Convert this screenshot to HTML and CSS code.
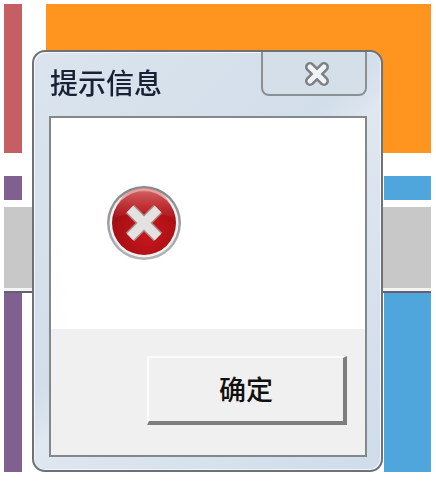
FILE: index.html
```html
<!DOCTYPE html>
<html lang="zh">
<head>
<meta charset="utf-8">
<title>提示信息</title>
<link rel="stylesheet" href="styles.css">
</head>
<body>
<div class="page">
  <div class="backdrop">
    <div class="row-top">
      <div class="tile red"></div>
      <div class="tile orange"></div>
    </div>
    <div class="row-split short">
      <div class="tile purple narrow"></div>
      <div class="tile blue side"></div>
    </div>
    <div class="band"></div>
    <div class="row-split tall">
      <div class="tile purple narrow"></div>
      <div class="tile blue side"></div>
    </div>
  </div>
  <div class="dialog">
    <div class="titlebar">
      <span class="title">提示信息</span>
      <div class="close">
        <svg class="close-icon" viewBox="0 0 30 24" width="30" height="24" aria-hidden="true">
          <path class="x-outer" d="M8 5L22 19M22 5L8 19"/>
          <path class="x-inner" d="M8 5L22 19M22 5L8 19"/>
        </svg>
      </div>
    </div>
    <div class="panel">
      <div class="content">
        <svg class="error-icon" viewBox="0 0 76 76" width="76" height="76" aria-hidden="true">
          <defs>
            <radialGradient id="redFill" cx="55%" cy="65%" r="60%">
              <stop offset="0" stop-color="#c8181d"/>
              <stop offset="0.7" stop-color="#ae1015"/>
              <stop offset="1" stop-color="#9c0d13"/>
            </radialGradient>
            <linearGradient id="ringFill" x1="0" y1="0" x2="0" y2="1">
              <stop offset="0" stop-color="#85888b"/>
              <stop offset="1" stop-color="#b3b5b7"/>
            </linearGradient>
            <linearGradient id="shine" x1="0" y1="0" x2="0" y2="1">
              <stop offset="0" stop-color="#e98686" stop-opacity="0.8"/>
              <stop offset="1" stop-color="#d94a4c" stop-opacity="0.15"/>
            </linearGradient>
          </defs>
          <circle cx="38" cy="38" r="37" fill="url(#ringFill)"/>
          <circle cx="38" cy="38" r="34.500" fill="#f1f1f1"/>
          <circle cx="38" cy="38" r="32" fill="url(#redFill)"/>
          <path d="M8 33A30 30 0 0 1 68 33Q38 22 8 33Z" fill="url(#shine)"/>
          <path class="cross-edge" d="M24 24L52 52M52 24L24 52"/>
          <path class="cross" d="M24 24L52 52M52 24L24 52"/>
        </svg>
      </div>
      <div class="footer">
        <button class="ok" type="button">确定</button>
      </div>
    </div>
  </div>
</div>
</body>
</html>
```

FILE: styles.css
```css
* {
  box-sizing: border-box;
}

html,
body {
  margin: 0;
  background: #fff;
}

.page {
  position: relative;
  width: 436px;
  height: 500px;
  overflow: hidden;
  font-family: "Noto Sans CJK SC", "Liberation Sans", sans-serif;
  filter: blur(0.45px);
}

.backdrop {
  display: flex;
  flex-direction: column;
  padding: 4px 5px 0 4px;
}

.row-top {
  display: flex;
  gap: 24px;
  height: 149px;
}

.red {
  width: 18px;
  background: #c65f63;
}

.orange {
  flex: 1;
  background: #ff951f;
}

.row-split {
  display: flex;
  justify-content: space-between;
}

.short {
  height: 24px;
  margin-top: 23px;
}

.tall {
  height: 179px;
}

.narrow {
  width: 18px;
}

.side {
  width: 47px;
}

.purple {
  background: #80608f;
}

.blue {
  background: #4fa6dc;
}

.band {
  height: 86px;
  margin-top: 7px;
  border-bottom: 2px solid #66606a;
  background: linear-gradient(#c8c8c8 0, #c8c8c8 81px, #f4f4f4 81px, #f4f4f4 84px);
}

.dialog {
  position: absolute;
  left: 32px;
  top: 50px;
  width: 351px;
  height: 422px;
  display: flex;
  flex-direction: column;
  padding: 0 14px 13px 15px;
  border: 2px solid #6d7277;
  border-radius: 13px;
  background: linear-gradient(135deg, #dbe4ee 0, #d2deea 45%, #dfe7f0 52%, #cfdcea 100%);
  box-shadow: inset 1px 1px 0 #f2f6fa, inset -1px -1px 0 #f2f6fa;
}

.titlebar {
  display: flex;
  justify-content: space-between;
  align-items: flex-start;
  height: 64px;
}

.title {
  margin: 10px 0 0 1px;
  font-size: 28px;
  font-weight: 500;
  line-height: 40px;
  color: #172335;
}

.close {
  display: flex;
  align-items: center;
  justify-content: center;
  width: 106px;
  height: 44px;
  padding: 1px 0 0 5px;
  border: 2px solid #8b9094;
  border-top: 0;
  border-radius: 0 0 8px 8px;
  background: #d5dfe9;
}

.x-outer {
  fill: none;
  stroke: #7c8085;
  stroke-width: 10;
  stroke-linecap: round;
}

.x-inner {
  fill: none;
  stroke: #f1f3f6;
  stroke-width: 5;
  stroke-linecap: round;
}

.panel {
  flex: 1;
  display: flex;
  flex-direction: column;
  border: 2px solid #85888b;
  background: #fff;
}

.content {
  height: 211px;
  padding: 67px 0 0 55px;
}

.error-icon {
  display: block;
}

.cross-edge {
  fill: none;
  stroke: #a9898a;
  stroke-width: 12;
}

.cross {
  fill: none;
  stroke: #e4e1e1;
  stroke-width: 9;
}

.footer {
  flex: 1;
  padding: 27px 0 0 96px;
  background: #f0f0f0;
}

.ok {
  display: block;
  width: 200px;
  height: 69px;
  padding: 0 0 3px;
  border-style: solid;
  border-width: 2px 4px 4px 2px;
  border-color: #fbfbfb #7d7d7d #7d7d7d #fbfbfb;
  background: #f0f0f0;
  color: #101010;
  font-family: inherit;
  font-size: 27px;
  font-weight: 500;
  line-height: 1;
}
```
